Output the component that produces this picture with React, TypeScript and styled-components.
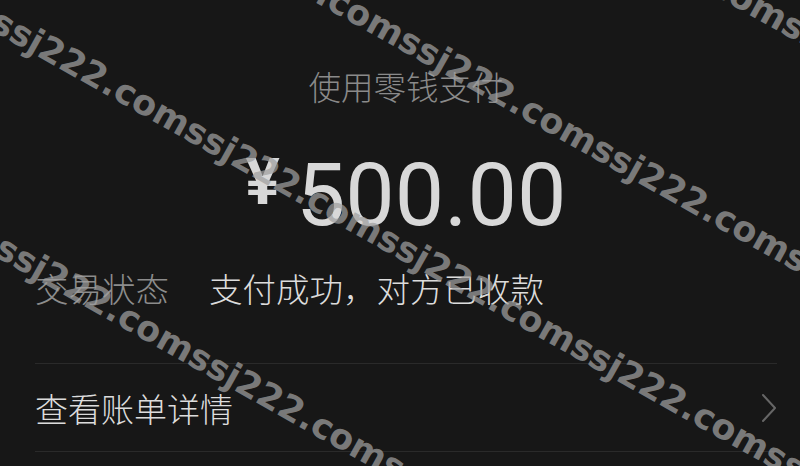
import React from "react";
import styled, { createGlobalStyle } from "styled-components";

// 水印一行的起点（文字中线上的点），都在画面左上方之外
const watermarkLines = [
  { x: -375, y: -625 },
  { x: -372, y: -393 },
  { x: -393, y: -195 },
  { x: -389, y: 31 },
];

const GlobalStyle = createGlobalStyle`
  html, body {
    margin: 0;
    padding: 0;
    background: #171717;
  }
`;

const App: React.FC = () => {
  return (
    <>
      <GlobalStyle />
      <Page>
        <PayMethod>使用零钱支付</PayMethod>
        <Amount>
          <Currency>¥</Currency>
          <Number>500.00</Number>
        </Amount>
        <StatusRow>
          <StatusLabel>交易状态</StatusLabel>
          <StatusValue>支付成功，对方已收款</StatusValue>
        </StatusRow>
        <Divider $top={55} />
        <LinkRow>
          <LinkText>查看账单详情</LinkText>
          <svg width="16" height="30" viewBox="0 0 16 30" fill="none">
            <path
              d="M2 2 L14 15 L2 28"
              stroke="#666666"
              strokeWidth="2"
              strokeLinecap="round"
              strokeLinejoin="round"
            />
          </svg>
        </LinkRow>
        <Divider />

        {/* 水印 */}
        <Watermark>
          {watermarkLines.map((line, index) => (
            <WatermarkLine key={index} $x={line.x} $y={line.y}>
              {"ssj222.com".repeat(8)}
            </WatermarkLine>
          ))}
        </Watermark>
      </Page>
    </>
  );
};

export default App;

// 整个页面
const Page = styled.div`
  position: relative;
  width: 800px;
  height: 466px;
  overflow: hidden;
  box-sizing: border-box;
  padding: 66px 23px 0 35px;
  display: flex;
  flex-direction: column;
  background: #171717;
  font-family: "Noto Sans CJK SC", "Noto Sans", sans-serif;
  font-weight: 300;
`;

// 支付方式
const PayMethod = styled.div`
  font-size: 32.5px;
  line-height: 40px;
  color: #8a8a8a;
  text-align: center;
`;

// 金额
const Amount = styled.div`
  margin-top: 45px;
  height: 88px;
  display: flex;
  justify-content: center;
  align-items: flex-start;
  color: #d8d8d8;
  font-family: Roboto, "Liberation Sans", sans-serif;
`;

const Currency = styled.span`
  font-size: 64px;
  line-height: 64px;
  font-weight: 700;
  margin-right: 16px;
`;

const Number = styled.span`
  font-size: 88px;
  line-height: 88px;
  font-weight: 400;
`;

// 交易状态
const StatusRow = styled.div`
  margin-top: 29px;
  display: flex;
  gap: 40px;
  font-size: 33.5px;
  line-height: 40px;
`;

const StatusLabel = styled.span`
  color: #8c8c8c;
`;

const StatusValue = styled.span`
  color: #dcdcdc;
`;

// 分割线
const Divider = styled.div<{ $top?: number }>`
  height: 1px;
  background: #2a2a2a;
  margin-top: ${(p) => p.$top ?? 0}px;
`;

// 查看账单详情
const LinkRow = styled.div`
  height: 87px;
  display: flex;
  align-items: center;
  justify-content: space-between;
`;

const LinkText = styled.span`
  font-size: 33px;
  line-height: 40px;
  color: #dcdcdc;
`;

// 水印层
const Watermark = styled.div`
  position: absolute;
  inset: 0;
  pointer-events: none;
  overflow: hidden;
`;

const WatermarkLine = styled.div<{ $x: number; $y: number }>`
  position: absolute;
  left: ${(p) => p.$x}px;
  top: ${(p) => p.$y - 20}px;
  transform-origin: 0 20px;
  transform: rotate(29.25deg);
  white-space: nowrap;
  font-family: "DejaVu Sans", Verdana, sans-serif;
  font-weight: 700;
  font-size: 35px;
  line-height: 35px;
  color: rgba(160, 160, 160, 0.72);
`;
